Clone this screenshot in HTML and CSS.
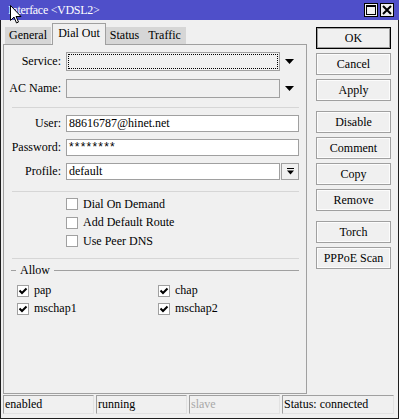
FILE: index.html
```html
<!DOCTYPE html>
<html lang="en">
<head>
    <meta charset="UTF-8">
    <title>Interface &lt;VDSL2&gt;</title>
    <link rel="stylesheet" href="styles.css">
</head>
<body>

<div class="window">
    <!-- title bar -->
    <div class="titlebar">
        <span class="title">Interface &lt;VDSL2&gt;</span>
        <span class="tbtn">
            <svg width="10" height="10" viewBox="0 0 10 10"><rect x="0.5" y="0.5" width="9" height="9" fill="none" stroke="#000"/><rect x="0" y="0" width="10" height="2" fill="#000"/></svg>
        </span>
        <span class="tbtn">
            <svg width="10" height="10" viewBox="0 0 10 10"><path d="M1 1 L9 9 M9 1 L1 9" stroke="#000" stroke-width="2"/></svg>
        </span>
    </div>

    <div class="body">
        <div class="main">
            <div class="tabs">
                <div class="tab t-general">General</div>
                <div class="tab active t-dial">Dial Out</div>
                <div class="tab t-status">Status</div>
                <div class="tab t-traffic">Traffic</div>
            </div>

            <div class="panel">
                <div class="row row-sel">
                    <span class="lbl">Service:</span>
                    <span class="field off focus"><span class="dots"></span></span>
                    <span class="drop"><svg width="9" height="5" viewBox="0 0 9 5"><polygon points="0,0 9,0 4.5,5" fill="#000"/></svg></span>
                </div>
                <div class="row row-sel">
                    <span class="lbl">AC Name:</span>
                    <span class="field off"></span>
                    <span class="drop"><svg width="9" height="5" viewBox="0 0 9 5"><polygon points="0,0 9,0 4.5,5" fill="#000"/></svg></span>
                </div>

                <div class="sep s1"></div>

                <div class="row">
                    <span class="lbl">User:</span>
                    <span class="field">88616787@hinet.net</span>
                </div>
                <div class="row">
                    <span class="lbl">Password:</span>
                    <span class="field pw">********</span>
                </div>
                <div class="row">
                    <span class="lbl">Profile:</span>
                    <span class="field">default</span>
                    <span class="pbtn"><svg width="7" height="7" viewBox="0 0 7 7"><rect x="0" y="0" width="7" height="1" fill="#000"/><polygon points="0,2.5 7,2.5 3.5,6.5" fill="#000"/></svg></span>
                </div>

                <div class="sep s2"></div>

                <div class="checks">
                    <div class="chk"><span class="box"></span>Dial On Demand</div>
                    <div class="chk"><span class="box"></span>Add Default Route</div>
                    <div class="chk"><span class="box"></span>Use Peer DNS</div>
                </div>

                <div class="sep s3"></div>

                <div class="group">
                    <span class="gl short"></span>
                    <span class="gt">Allow</span>
                    <span class="gl"></span>
                </div>
                <div class="allow">
                    <div class="chk"><span class="box on"><svg width="10" height="10" viewBox="0 0 10 10"><path d="M1.5 4.5 L4 7 L8.5 2.5" fill="none" stroke="#000" stroke-width="2"/></svg></span>pap</div>
                    <div class="chk"><span class="box on"><svg width="10" height="10" viewBox="0 0 10 10"><path d="M1.5 4.5 L4 7 L8.5 2.5" fill="none" stroke="#000" stroke-width="2"/></svg></span>chap</div>
                    <div class="chk"><span class="box on"><svg width="10" height="10" viewBox="0 0 10 10"><path d="M1.5 4.5 L4 7 L8.5 2.5" fill="none" stroke="#000" stroke-width="2"/></svg></span>mschap1</div>
                    <div class="chk"><span class="box on"><svg width="10" height="10" viewBox="0 0 10 10"><path d="M1.5 4.5 L4 7 L8.5 2.5" fill="none" stroke="#000" stroke-width="2"/></svg></span>mschap2</div>
                </div>
            </div>
        </div>

        <!-- buttons -->
        <div class="side">
            <div class="btn ok">OK</div>
            <div class="btn">Cancel</div>
            <div class="btn">Apply</div>
            <div class="btn gap">Disable</div>
            <div class="btn">Comment</div>
            <div class="btn">Copy</div>
            <div class="btn">Remove</div>
            <div class="btn gap">Torch</div>
            <div class="btn">PPPoE Scan</div>
        </div>
    </div>

    <!-- status bar -->
    <div class="status">
        <div class="cell">enabled</div>
        <div class="cell">running</div>
        <div class="cell dim">slave</div>
        <div class="cell wide">Status: connected</div>
    </div>

    <svg class="cursor" width="12" height="19" viewBox="0 0 12 19"><path d="M0.5 0.5 V15.5 L4 12 L6.5 18 L8.5 17 L6 11.5 H11 Z" fill="#fff" stroke="#000"/></svg>
</div>

</body>
</html>
```

FILE: styles.css
```css
* { box-sizing: border-box; }
body { margin: 0; background: #f0f0f0; font-family: "Liberation Serif", serif; font-size: 12px; color: #000; }

.window { position: relative; width: 399px; height: 419px; background: #f0f0f0; border: 1px solid #1e1e1e; border-top: 0; }
.titlebar { display: flex; align-items: center; height: 20px; margin: 0 -1px; padding: 0 5px 0 8px; background: #4f4fc9; color: #fff; font-size: 12px; letter-spacing: -0.3px; }
.title { flex: 1; }
.tbtn { display: flex; align-items: center; justify-content: center; width: 14px; height: 14px; margin-left: 2px; border: 1px solid #000; background: #f0f0f0; }

.body { display: flex; padding-top: 2px; }
.main { width: 304px; margin-left: 2px; }

.tabs { display: flex; align-items: flex-end; height: 22px; padding-left: 2px; }
.tab { display: flex; align-items: center; justify-content: center; height: 17px; background: #d6d6d6; }
.tab.active { position: relative; z-index: 1; height: 22px; margin-bottom: -1px; border: 1px solid #a0a0a0; border-bottom: 0; background: #f0f0f0; padding-bottom: 2px; }
.t-general { width: 46px; margin-right: 1px; }
.t-dial { width: 54px; }
.t-status { width: 37px; }
.t-traffic { width: 43px; }

.panel { height: 350px; border: 1px solid #a0a0a0; padding: 7px 7px 0 0; }

.row { display: flex; align-items: center; margin-bottom: 7px; }
.row-sel { margin-bottom: 8px; }
.lbl { width: 57px; margin-right: 5px; text-align: right; }
.field { flex: 1; height: 17px; padding-left: 2px; border: 1px solid #a0a0a0; background: #fff; line-height: 15px; white-space: nowrap; }
.field.off { height: 19px; background: #f0f0f0; }
.field.focus { padding: 1px; }
.dots { display: block; height: 100%; border: 1px dotted #000; }
.pw { font-family: "Liberation Sans", sans-serif; font-size: 12px; letter-spacing: 1.2px; }
.drop { display: flex; justify-content: center; width: 19px; }
.pbtn { display: flex; align-items: center; justify-content: center; width: 18px; height: 17px; margin-left: 1px; border: 1px solid #a0a0a0; background: #f0f0f0; }

.sep { height: 1px; margin-left: 8px; background: #d6d6d6; }
.s1 { margin-top: 9px; margin-bottom: 7px; }
.s2 { margin-top: 11px; margin-bottom: 3px; }
.s3 { margin-top: 7px; margin-bottom: 5px; }

.chk { display: flex; align-items: center; height: 18.5px; white-space: nowrap; }
.checks { padding-left: 62px; }
.box { display: flex; align-items: center; justify-content: center; width: 12px; height: 12px; margin-right: 5px; border: 1px solid #a0a0a0; background: #fff; }

.group { display: flex; align-items: center; height: 14px; margin-bottom: 4px; padding-left: 7px; }
.gl { flex: 1; height: 1px; background: #a0a0a0; }
.gl.short { flex: none; width: 5px; }
.gt { margin: 0 4px; }

.allow { display: grid; grid-template-columns: 141px 1fr; padding-left: 13px; }
.allow .chk { height: 18px; }

.side { display: flex; flex-direction: column; width: 75px; margin-left: 9px; padding-top: 5px; }
.btn { display: flex; align-items: center; justify-content: center; height: 22px; margin-bottom: 4px; border: 1px solid #a0a0a0; box-shadow: inset 0 0 0 1px #fcfcfc; background: #f0f0f0; }
.btn.ok { border-color: #000; box-shadow: inset 0 0 0 1px #a0a0a0; }
.btn.gap { margin-top: 6px; }

.status { display: flex; gap: 2px; height: 19px; margin-top: 1px; padding-left: 2px; }
.cell { width: 91px; padding-left: 1px; border: 1px solid; border-color: #a0a0a0 #e2e2e2 #e2e2e2 #a0a0a0; line-height: 17px; white-space: nowrap; }
.cell.wide { width: 112px; }
.cell.dim { color: #a8a8a8; }

.cursor { position: absolute; left: 9px; top: 5px; }
```
